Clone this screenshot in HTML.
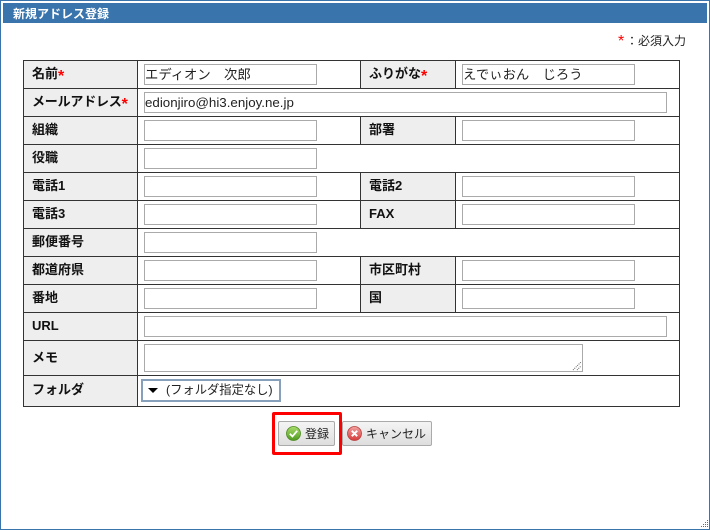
<!DOCTYPE html>
<html lang="ja"><head><meta charset="utf-8"><style>
html,body{margin:0;padding:0;background:#fff}
body{position:relative;width:710px;height:530px;overflow:hidden;font-family:"Liberation Sans","Noto Sans CJK JP",sans-serif;color:#000}
.a{position:absolute;box-sizing:border-box}
.h{left:23px;width:657px;height:1px;background:#333}
.v{width:1px;background:#333}
.g{background:#eee}
.l{font-size:13px;font-weight:bold;line-height:18px;white-space:nowrap;color:#111}
.l i{color:#f00;font-style:normal;font-size:16px;line-height:0;position:relative;top:3px}
.in{border:1px solid #aaa;background:#fff;height:21px;font-size:13.33px;line-height:19px;padding-left:0;white-space:nowrap;color:#222}
.w{left:144px;width:173px}.x{left:462px;width:173px}.y{left:144px;width:523px}
.btn{border:1px solid #aaa;border-radius:2px;background:linear-gradient(#f4f4f4,#dedede);height:25px;top:421px;font-size:12px;line-height:24px;white-space:nowrap;color:#222}
</style></head><body>
<div class="a" style="left:0;top:0;width:710px;height:530px;border:1px solid #3a74ac"></div>
<div class="a" style="left:3px;top:3px;width:704px;height:20px;background:#3a74ac;color:#fff;font-size:12px;font-weight:bold;line-height:22px;padding-left:10px">新規アドレス登録</div>
<div class="a" style="left:618px;top:33px;font-size:16px;line-height:17px;color:#f00;white-space:nowrap">*</div>
<div class="a" style="left:626px;top:33px;font-size:12px;line-height:17px;white-space:nowrap;color:#222">：</div>
<div class="a" style="left:638px;top:33px;font-size:12px;line-height:17px;white-space:nowrap;color:#222">必須入力</div>

<div class="a g" style="left:24px;top:61px;width:113px;height:345px"></div>
<div class="a g" style="left:361px;top:61px;width:94px;height:27px"></div>
<div class="a g" style="left:361px;top:117px;width:94px;height:27px"></div>
<div class="a g" style="left:361px;top:173px;width:94px;height:55px"></div>
<div class="a g" style="left:361px;top:257px;width:94px;height:55px"></div>

<div class="a h" style="top:60px"></div><div class="a h" style="top:88px"></div><div class="a h" style="top:116px"></div><div class="a h" style="top:144px"></div><div class="a h" style="top:172px"></div><div class="a h" style="top:200px"></div><div class="a h" style="top:228px"></div><div class="a h" style="top:256px"></div><div class="a h" style="top:284px"></div><div class="a h" style="top:312px"></div><div class="a h" style="top:340px"></div><div class="a h" style="top:375px"></div><div class="a h" style="top:406px"></div>
<div class="a v" style="left:23px;top:60px;height:347px"></div>
<div class="a v" style="left:137px;top:60px;height:347px"></div>
<div class="a v" style="left:679px;top:60px;height:347px"></div>
<div class="a v" style="left:360px;top:60px;height:28px"></div><div class="a v" style="left:455px;top:60px;height:28px"></div>
<div class="a v" style="left:360px;top:116px;height:28px"></div><div class="a v" style="left:455px;top:116px;height:28px"></div>
<div class="a v" style="left:360px;top:172px;height:56px"></div><div class="a v" style="left:455px;top:172px;height:56px"></div>
<div class="a v" style="left:360px;top:256px;height:56px"></div><div class="a v" style="left:455px;top:256px;height:56px"></div>

<div class="a l" style="left:32px;top:65px">名前<i>*</i></div>
<div class="a l" style="left:369px;top:65px">ふりがな<i>*</i></div>
<div class="a l" style="left:32px;top:93px;letter-spacing:-.2px">メールアドレス<i>*</i></div>
<div class="a l" style="left:32px;top:121px">組織</div>
<div class="a l" style="left:369px;top:121px">部署</div>
<div class="a l" style="left:32px;top:149px">役職</div>
<div class="a l" style="left:32px;top:177px">電話1</div>
<div class="a l" style="left:369px;top:177px">電話2</div>
<div class="a l" style="left:32px;top:205px">電話3</div>
<div class="a l" style="left:369px;top:205px">FAX</div>
<div class="a l" style="left:32px;top:233px">郵便番号</div>
<div class="a l" style="left:32px;top:261px">都道府県</div>
<div class="a l" style="left:369px;top:261px">市区町村</div>
<div class="a l" style="left:32px;top:289px">番地</div>
<div class="a l" style="left:369px;top:289px">国</div>
<div class="a l" style="left:32px;top:317px">URL</div>
<div class="a l" style="left:32px;top:349px">メモ</div>
<div class="a l" style="left:32px;top:381px">フォルダ</div>

<div class="a in w" style="top:64px">エディオン　次郎</div>
<div class="a in x" style="top:64px">えでぃおん　じろう</div>
<div class="a in y" style="top:92px">edionjiro@hi3.enjoy.ne.jp</div>
<div class="a in w" style="top:120px"></div><div class="a in x" style="top:120px"></div>
<div class="a in w" style="top:148px"></div>
<div class="a in w" style="top:176px"></div><div class="a in x" style="top:176px"></div>
<div class="a in w" style="top:204px"></div><div class="a in x" style="top:204px"></div>
<div class="a in w" style="top:232px"></div>
<div class="a in w" style="top:260px"></div><div class="a in x" style="top:260px"></div>
<div class="a in w" style="top:288px"></div><div class="a in x" style="top:288px"></div>
<div class="a in y" style="top:316px"></div>
<div class="a in" style="left:144px;top:344px;width:439px;height:28px"></div>
<svg class="a" style="left:572px;top:361px" width="10" height="10"><path d="M1 9L9 1M5 9L9 5" stroke="#666" stroke-width="1" stroke-dasharray="1 1" fill="none"/></svg>

<div class="a" style="left:141px;top:379px;width:140px;height:23px;border:2px solid #86a0bc;background:#fff;font-size:12.3px;line-height:18px;padding-left:23px;white-space:nowrap;color:#222">(フォルダ指定なし)</div>
<div class="a" style="left:148px;top:388px;width:0;height:0;border-left:5px solid transparent;border-right:5px solid transparent;border-top:5px solid #000"></div>

<div class="a" style="left:272px;top:412px;width:70px;height:43px;border:3px solid #f00;border-radius:2px"></div>
<div class="a btn" style="left:278px;width:57px;padding-left:26px">登録</div>
<svg class="a" style="left:286px;top:426px" width="15" height="15" viewBox="0 0 15 15"><defs><linearGradient id="gr" x1="0" y1="0" x2="0" y2="1"><stop offset="0" stop-color="#a8dc6a"/><stop offset="1" stop-color="#4f9a1e"/></linearGradient></defs><circle cx="7.5" cy="7.5" r="7" fill="url(#gr)" stroke="#4d8a22" stroke-width=".8"/><path d="M3.8 7.8L6.4 10.4L11.2 4.8" stroke="#fff" stroke-width="1.8" fill="none"/></svg>
<div class="a btn" style="left:342px;width:90px;padding-left:23px">キャンセル</div>
<svg class="a" style="left:347px;top:426px" width="15" height="15" viewBox="0 0 15 15"><defs><linearGradient id="rd" x1="0" y1="0" x2="0" y2="1"><stop offset="0" stop-color="#f2a0a0"/><stop offset="1" stop-color="#d83a3a"/></linearGradient></defs><circle cx="7.5" cy="7.5" r="7" fill="url(#rd)" stroke="#b84040" stroke-width=".8"/><path d="M4.8 4.8L10.2 10.2M10.2 4.8L4.8 10.2" stroke="#fff" stroke-width="2" fill="none"/></svg>

<svg class="a" style="left:700px;top:520px" width="8" height="8"><path d="M7 0h1v1h-1zM5 2h1v1h-1zM7 2h1v1h-1zM3 4h1v1h-1zM5 4h1v1h-1zM7 4h1v1h-1zM1 6h1v1h-1zM3 6h1v1h-1zM5 6h1v1h-1zM7 6h1v1h-1z" fill="#3a74ac"/></svg>
</body></html>
